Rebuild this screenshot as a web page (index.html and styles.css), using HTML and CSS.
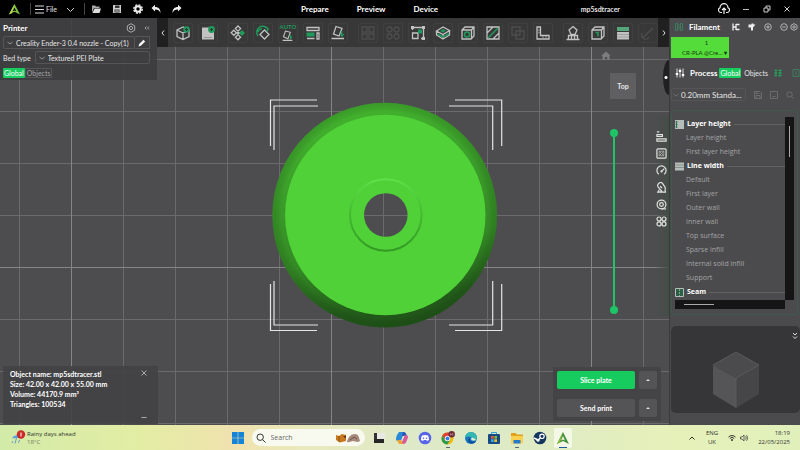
FILE: index.html
```html
<!DOCTYPE html>
<html lang="en">
<head>
<meta charset="utf-8">
<title>mp5sdtracer</title>
<link rel="stylesheet" href="styles.css">
</head>
<body>

<header class="titlebar">
    <div class="title-left">
        <svg class="logo" viewBox="0 0 14 14"><path d="M1 12.500 L7 1 L13 12.500 L7 9.500Z M7 5 L5 9 L7 8 L9 9Z" fill="#7cc242" fill-rule="evenodd"/><path d="M7 1 L1 12.500 L4 11Z" fill="#c6d64a"/></svg>
        <span class="sep"></span>
        <button class="file"><svg class="i9" viewBox="0 0 9 9"><path d="M0 1h9M0 4.500h9M0 8h9" stroke="#ddd"/></svg>File</button>
        <button class="drop" aria-label="More"><svg class="i9" viewBox="0 0 9 9"><path d="M1 3l3.500 3.500L8 3" stroke="#ccc" fill="none"/></svg></button>
        <span class="sep"></span>
        <div class="quick">
            <button aria-label="Open"><svg class="i10" viewBox="0 0 10 10"><path d="M1 8.500V1.500h3l1 1h3.500v1.500H3z" fill="#aaa"/><path d="M1.500 9L3.500 4.500H10L8.500 9z" fill="#ddd"/></svg></button>
            <button aria-label="Save"><svg class="i10" viewBox="0 0 10 10"><path d="M1 1h8v8H1z" fill="#ccc"/><path d="M3 1.500h4.500v2.500H3zM2.500 5.500h5v3h-5z" fill="#333"/><path d="M3 7h4" stroke="#ccc"/></svg></button>
            <button aria-label="Settings"><svg class="i10" viewBox="0 0 10 10"><circle cx="5" cy="5" r="2.700" fill="none" stroke="#eee" stroke-width="2"/><circle cx="5" cy="5" r="4.200" fill="none" stroke="#eee" stroke-width="1.400" stroke-dasharray="2 1.300"/></svg></button>
            <button class="undo" aria-label="Undo"><svg class="i10" viewBox="0 0 10 10"><path d="M0.500 4L4 0.800V3c3.500 0 5.500 2 5.500 6C8.500 6.500 7 5.500 4 5.500v2z" fill="#eee"/></svg></button>
            <button aria-label="Redo"><svg class="i10" viewBox="0 0 10 10"><path d="M9.500 4L6 0.800V3C2.500 3 0.500 5 0.500 9 1.500 6.500 3 5.500 6 5.500v2z" fill="#eee"/></svg></button>
        </div>
    </div>
    <nav class="tabs">
        <a href="#prepare">Prepare</a>
        <a href="#preview">Preview</a>
        <a href="#device">Device</a>
    </nav>
    <span class="project">mp5sdtracer</span>
    <div class="title-right">
        <button aria-label="Upload"><svg class="i12" viewBox="0 0 12 12"><path d="M4 9.500H3A2.500 2.500 0 0 1 2 4.700 4 4 0 0 1 10 4.700 2.500 2.500 0 0 1 9 9.500H8M6 11V5M4 7l2-2 2 2" fill="none" stroke="#eee" stroke-width="1.200"/></svg></button>
        <button aria-label="Minimize"><svg class="i8" viewBox="0 0 8 8"><path d="M1 4.500h6" stroke="#bbb"/></svg></button>
        <button aria-label="Restore"><svg class="i8" viewBox="0 0 8 8"><path d="M1 3h4v4H1zM3 3V1h4v4H5" fill="none" stroke="#ccc"/></svg></button>
        <button aria-label="Close"><svg class="i8" viewBox="0 0 8 8"><path d="M1.500 1.500l5 5M6.500 1.500l-5 5" stroke="#ccc"/></svg></button>
    </div>
</header>

<main class="work">
    <section class="viewport">
        <svg class="scene" viewBox="0 0 669 407" preserveAspectRatio="xMidYMid slice">
            <defs>
                <pattern id="grid" x="19" y="41" width="52" height="52" patternUnits="userSpaceOnUse"><path d="M0 0.500H52M0.500 0V52" stroke="#6a6a6d"/></pattern>
                <linearGradient id="side" x1="0.400" y1="0" x2="0.600" y2="1">
                    <stop offset="0" stop-color="#43b32e"/><stop offset="0.350" stop-color="#3b9d2a"/><stop offset="0.650" stop-color="#348a25"/><stop offset="0.900" stop-color="#225a1a"/><stop offset="1" stop-color="#205218"/>
                </linearGradient>
                <radialGradient id="rim"><stop offset="0.920" stop-color="#000" stop-opacity="0"/><stop offset="1" stop-color="#173f12" stop-opacity="0.200"/></radialGradient>
                <linearGradient id="lip" x1="0" y1="0" x2="0" y2="1">
                    <stop offset="0" stop-color="#62df4b"/><stop offset="0.450" stop-color="#45bd32"/><stop offset="1" stop-color="#329a23"/>
                </linearGradient>
                <mask id="hole"><rect width="669" height="407" fill="#fff"/><circle cx="385.800" cy="197" r="21.800" fill="#000"/></mask>
            </defs>
            <rect width="669" height="407" fill="#4d4d50"/>
            <rect width="669" height="407" fill="url(#grid)"/>
            <path d="M71.500 0V407M331.500 0V407M591.500 0V407M0 249.500H669" stroke="#858588"/>
            <g fill="none" stroke="#e4e4e4" stroke-width="1.200">
                <path d="M317 82H270.500V128M318 88H274V132M455 82H501.700V128M449 88H492.700V132"/>
                <path d="M317 312.500H270.500V266M318 307H274V263M455 312.500H501.700V266M449 307H492.700V263"/>
            </g>
            <g mask="url(#hole)">
                <circle cx="384.700" cy="197.200" r="112.400" fill="url(#side)"/>
                <circle cx="384.700" cy="197.200" r="112.400" fill="url(#rim)"/>
                <circle cx="385.300" cy="197" r="100.200" fill="#4fd137"/>
                <circle cx="385.800" cy="197" r="35.800" fill="none" stroke="url(#lip)" stroke-width="2"/>
            </g>
        </svg>

        <aside class="printer">
            <div class="head">
                <h2>Printer</h2>
                <button aria-label="Printer settings"><svg class="i10" viewBox="0 0 10 10"><path d="M5 0.700l3.700 2.100v4.400L5 9.300 1.300 7.200V2.800z" fill="none" stroke="#aaa"/><circle cx="5" cy="5" r="1.600" fill="none" stroke="#aaa"/></svg></button>
                <button aria-label="Collapse"><svg class="i6" viewBox="0 0 6 6"><path d="M2.500 1.500L1 3l1.500 1.500M5 1.500L3.500 3 5 4.500" fill="none" stroke="#bbb" stroke-width="0.800"/></svg></button>
            </div>
            <div class="machine">
                <div class="pick grow">
                    <svg class="i6" viewBox="0 0 6 6"><path d="M0.500 2L3 4 5.500 2" fill="none" stroke="#aaa" stroke-width="0.800"/></svg>
                    <select aria-label="Printer"><option>Creality Ender-3 0.4 nozzle - Copy(1)</option></select>
                </div>
                <button class="edit" aria-label="Edit"><svg class="i8" viewBox="0 0 8 8"><path d="M0.500 7.500l0.700-2.400L5.500 0.800l1.700 1.700-4.300 4.300z" fill="#f4f4f4"/></svg></button>
            </div>
            <div class="bed">
                <label for="bed">Bed type</label>
                <div class="pick grow">
                    <svg class="i6" viewBox="0 0 6 6"><path d="M0.500 2L3 4 5.500 2" fill="none" stroke="#aaa" stroke-width="0.800"/></svg>
                    <select id="bed"><option>Textured PEI Plate</option></select>
                </div>
            </div>
            <div class="scope">
                <button class="on">Global</button><button>Objects</button>
            </div>
        </aside>

        <div class="toolbar">
            <button class="arrow" aria-label="Scroll left"><svg class="i8" viewBox="0 0 8 8"><path d="M5 1.500L3 4l2 2.500" fill="none" stroke="#ddd"/></svg></button>
            <div class="tools">
                <div class="group">
                    <button aria-label="Add model"><svg viewBox="0 0 16 16"><path d="M8 2L2 5v6.500L8 14.500l6-3V5zM2 5l6 3 6-3M8 8v6.500" class="w"/><circle cx="11.500" cy="4.500" r="3.200" fill="#1f9a5c"/><path d="M11.500 3v3M10 4.500h3" stroke="#2d3a32"/></svg></button>
                    <button aria-label="Add plate"><svg viewBox="0 0 16 16"><path d="M2 2.500h12v12H2z" fill="#c2c2c2"/><path d="M4 12.500h8" stroke="#999"/><circle cx="11.500" cy="4.500" r="3.400" fill="#1f9a5c"/><path d="M11.500 3v3M10 4.500h3" stroke="#2d3a32"/></svg></button>
                </div>
                <div class="group">
                    <button aria-label="Move"><svg viewBox="0 0 16 16"><path d="M8 1l2.600 2.600L8 6.200 5.400 3.600zM3.800 5.200l2.600 2.600-2.600 2.600-2.600-2.600zM8 9.600l2.600 2.600L8 14.800l-2.600-2.600z" class="w"/><path d="M12 5l3 3-3 3-3-3z" fill="#1f9a5c"/><path d="M6.500 7h3v2h-3z" fill="#c2c2c2"/></svg></button>
                    <button aria-label="Rotate"><svg viewBox="0 0 16 16"><path d="M9.500 5l4.500 4.500-4.500 4.500L5 9.500z" class="w"/><path d="M3 11A6 6 0 0 1 12.500 3.500M10 2l3 1.500-1 3M3 7a3.500 3.500 0 0 1 4-3" class="g"/></svg></button>
                    <button class="auto" aria-label="Auto orient"><span>AUTO</span><svg viewBox="0 0 16 16"><path d="M5.500 2.500l6 1.500-3 8-5.500-2.500zM2 14h12" class="w"/><path d="M11.500 7v5M13.500 9.500l-2 2.500" class="g"/></svg></button>
                    <button aria-label="Arrange"><svg viewBox="0 0 16 16"><path d="M2 2.500h12v3H2zM12 8h2v6h-2zM2 13.500h7.500" class="w"/><path d="M1.500 7.500h8v4h-8z" fill="#1f9a5c"/></svg></button>
                    <button aria-label="Lay flat"><svg viewBox="0 0 16 16"><path d="M6 1.500l6 2-3 7.500-5.500-2zM1.500 13.500H14" class="w"/><path d="M11.500 6v5M13.500 9l-2 2.500" class="g"/></svg></button>
                </div>
                <div class="group">
                    <button class="off" disabled aria-label="Split objects"><svg viewBox="0 0 16 16"><path d="M2 2h5v5H2zM9 2h5v5H9zM2 9h5v5H2zM9 9h5v5H9z" class="w"/></svg></button>
                    <button class="off" disabled aria-label="Split parts"><svg viewBox="0 0 16 16"><circle cx="4.500" cy="4.500" r="2.500" class="w"/><circle cx="11.500" cy="4.500" r="2.500" class="w"/><circle cx="4.500" cy="11.500" r="2.500" class="w"/><circle cx="11.500" cy="11.500" r="2.500" class="w"/></svg></button>
                    <button aria-label="Scale"><svg viewBox="0 0 16 16"><path d="M2.500 8h5.500v5.500H2.500zM2.500 5V2.500H13.500V13.500H11" class="w"/><path d="M1 1h3v3H1zM12 1h3v3h-3zM12 12h3v3h-3z" fill="#c2c2c2"/><path d="M8 4.500h4v4H8z" fill="#1f9a5c"/></svg></button>
                    <button aria-label="Cut"><svg viewBox="0 0 16 16"><path d="M1.500 6L8 2l6.500 3.500L8 9.500zM1.500 6v4L8 14l6.500-4V5.500M8 9.500V14" class="w"/><path d="M2.500 9L8 12l6-3.500" class="g"/><path d="M5 6l3-2 3 1.500-3 2z" fill="#1f9a5c"/></svg></button>
                    <button aria-label="Hollow"><svg viewBox="0 0 16 16"><path d="M2 5l3-3h9v9l-3 3H2zM2 5h9.500v9M11.500 5L14 2" class="w"/><circle cx="7" cy="9.500" r="2.500" class="g"/></svg></button>
                    <button aria-label="Hatch"><svg viewBox="0 0 16 16"><path d="M2 2h12v12H2zM2 8l6-6M8 14l6-6" class="w"/><path d="M3 13L13 3" class="g"/></svg></button>
                    <button class="off" disabled aria-label="Boolean"><svg viewBox="0 0 16 16"><path d="M2 2h8v8H2zM6 6h8v8H6z" class="w"/></svg></button>
                    <button aria-label="Measure"><svg viewBox="0 0 16 16"><path d="M2 2h3.500v8.500H14V14H2z" class="w"/><path d="M3.500 5h1M3.500 7.500h1M8 12.500v-1M11 12.500v-1" class="w"/></svg></button>
                </div>
                <div class="group">
                    <button aria-label="Supports"><svg viewBox="0 0 16 16"><path d="M8 1.500l4 3.500-2 4.500H6L4 5zM1.500 14.500h13M3.500 14v-3.500h9V14M6.500 14v-4M9.500 14v-4" class="w"/></svg></button>
                    <button aria-label="Seam"><svg viewBox="0 0 16 16"><path d="M2 5l3-3h9v9l-3 3H2zM2 5h9.500v9M11.500 5L14 2" class="w"/><path d="M5.500 7.500h2.500v4" class="g"/></svg></button>
                    <button aria-label="Layers"><svg viewBox="0 0 16 16"><path d="M2 2h12v4H2z" fill="#55a77b"/><path d="M2 7h12v7.500H2z" fill="#c2c2c2"/><path d="M2 9.500h12M2 12h12" stroke="#888" stroke-width="0.600"/></svg></button>
                    <button class="off" disabled aria-label="Paint"><svg viewBox="0 0 16 16"><path d="M3 12.500L13 3M2 8a4 4 0 1 0 7 4" class="w"/></svg></button>
                </div>
            </div>
            <button class="arrow" aria-label="Scroll right"><svg class="i8" viewBox="0 0 8 8"><path d="M3 1.500L5 4 3 6.500" fill="none" stroke="#ddd"/></svg></button>
        </div>

        <div class="view-cube">
            <button class="home" aria-label="Home view"><svg class="i10" viewBox="0 0 10 10"><path d="M5 0.500l4.700 4.300H8.500V9h-2.300V6H3.800v3H1.500V4.800H0.300z" fill="#7d7d7f"/></svg></button>
            <button class="face">Top</button>
        </div>
        <button class="fold" aria-label="Toggle sidebar"></button>

        <div class="layers">
            <input type="range" aria-label="Top layer" min="0" max="100" value="100">
            <input type="range" aria-label="Bottom layer" min="0" max="100" value="0">
        </div>

        <div class="categories">
            <button aria-label="Quality"><svg viewBox="0 0 12 12"><path d="M1 1h2.500M1 4h6v2H1zM1 8.500h10V11H1z" class="w"/></svg></button>
            <button aria-label="Strength"><svg viewBox="0 0 12 12"><rect x="1" y="1" width="10" height="10" rx="1" class="w"/><path d="M3.500 3.500h5v5h-5zM3.500 3.500l5 5M8.500 3.500l-5 5" stroke="#b4bab4" stroke-width="0.800" fill="none"/></svg></button>
            <button aria-label="Speed"><svg viewBox="0 0 12 12"><path d="M3 10a5 5 0 1 1 6 0M6 7l3-3" class="w"/><circle cx="6" cy="7" r="1.200" fill="#e0e4e0"/></svg></button>
            <button aria-label="Support"><svg viewBox="0 0 12 12"><path d="M2.500 5.500a3 3 0 0 1 5-3.500L10 6v5H7L2.500 5.500zM1 11h10M3 11V8.500M5.500 11V9M4.500 4.500l2 2" class="w"/></svg></button>
            <button aria-label="Adhesion"><svg viewBox="0 0 12 12"><circle cx="6" cy="6" r="4.800" class="w"/><circle cx="6" cy="6" r="2" class="w"/><path d="M6 10.800h5" class="w"/></svg></button>
            <button aria-label="Others"><svg viewBox="0 0 12 12"><circle cx="3.300" cy="3.300" r="2.200" class="w"/><circle cx="8.700" cy="3.300" r="2.200" class="w"/><circle cx="3.300" cy="8.700" r="2.200" class="w"/><circle cx="8.700" cy="8.700" r="2.200" class="w"/></svg></button>
        </div>

        <div class="object-info">
            <p>Object name: mp5sdtracer.stl<br>Size: 42.00 x 42.00 x 55.00 mm<br>Volume: 44170.9 mm³<br>Triangles: 100534</p>
            <div class="info-buttons">
                <button aria-label="Close"><svg class="i8" viewBox="0 0 8 8"><path d="M1.500 1.500l5 5M6.500 1.500l-5 5" stroke="#aaa"/></svg></button>
                <button aria-label="Minimize"><svg class="i6" viewBox="0 0 6 6"><path d="M0.500 3.500h5" stroke="#aaa"/></svg></button>
            </div>
        </div>

        <div class="actions">
            <button class="primary">Slice plate</button>
            <button class="more" aria-label="Slice options"><svg class="i6" viewBox="0 0 6 6"><path d="M1 4L3 2 5 4z" fill="#ddd"/></svg></button>
            <button>Send print</button>
            <button class="more" aria-label="Print options"><svg class="i6" viewBox="0 0 6 6"><path d="M1 4L3 2 5 4z" fill="#ddd"/></svg></button>
        </div>
    </section>

    <aside class="sidebar">
        <div class="filament-head">
            <svg class="i8" viewBox="0 0 8 8"><path d="M0.500 0.500h2v7h-2zM5.500 0.500h2v7h-2zM2.500 2h3M2.500 4h3M2.500 6h3" fill="none" stroke="#3c7c5c"/></svg>
            <h2>Filament</h2>
            <button aria-label="Sync"><svg class="i8" viewBox="0 0 8 8"><path d="M1 0.500v7M1 4h3M4 1v6M4 1.500h3.500M4 6.500h3.500" stroke="#eee" fill="none" stroke-width="1.300"/></svg></button>
            <button aria-label="Flush"><svg class="i8" viewBox="0 0 8 8"><path d="M0.500 1.500h3V0.500h2v1h2L5 4.500v3H3v-3H0.500z" fill="#eee"/></svg></button>
            <button aria-label="Add"><svg class="i8" viewBox="0 0 8 8"><circle cx="4" cy="4" r="3.300" class="l"/><path d="M4 2.200v3.600M2.200 4h3.600" class="l"/></svg></button>
            <button aria-label="Remove"><svg class="i8" viewBox="0 0 8 8"><circle cx="4" cy="4" r="3.300" class="l"/><path d="M2.200 4h3.600" class="l"/></svg></button>
            <button class="last" aria-label="Filament settings"><svg class="i8" viewBox="0 0 8 8"><path d="M4 0.600l3 1.700v3.400L4 7.400 1 5.700V2.300z" class="l"/><circle cx="4" cy="4" r="1.200" class="l"/></svg></button>
        </div>
        <button class="spool"><span>1</span><span>CR-PLA @Cre... <b>▾</b></span></button>

        <div class="process-head">
            <svg class="i10" viewBox="0 0 10 10"><path d="M2 0.500v9M5 0.500v9M8 0.500v9" stroke="#ddd"/><path d="M0.800 6h2.400M3.800 3h2.400M6.800 7h2.400" stroke="#fff" stroke-width="1.800"/></svg>
            <h2>Process</h2>
            <div class="scope"><button class="on">Global</button><button>Objects</button></div>
            <button aria-label="Tree view"><svg class="i8" viewBox="0 0 8 8"><path d="M0.500 1.500h2.500M0.500 4h2.500M0.500 6.500h2.500M4.500 1.500H7.500M4.500 4H7.500M4.500 6.500H7.500" stroke="#1fae60" stroke-width="1.300"/></svg></button>
            <button aria-label="Compare"><svg class="i8" viewBox="0 0 8 8"><path d="M1 0.500h6v7H1zM4 2v4" fill="none" stroke="#3c7c5c"/></svg></button>
        </div>
        <div class="preset">
            <div class="pick">
                <svg class="i6" viewBox="0 0 6 6"><path d="M0.500 2L3 4 5.500 2" fill="none" stroke="#777" stroke-width="0.800"/></svg>
                <select aria-label="Process preset"><option>0.20mm Standa...</option></select>
            </div>
            <button aria-label="Save preset"><svg class="i8" viewBox="0 0 8 8"><path d="M0.500 0.500h5.500l1.500 1.500v5.500h-7zM2 0.500v2h3M2 7.500v-3h4v3" class="d"/></svg></button>
            <button aria-label="Save preset as"><svg class="i8" viewBox="0 0 8 8"><path d="M0.500 0.500h7v7h-7zM2.500 5.500h3" class="d"/></svg></button>
            <button aria-label="Search"><svg class="i8" viewBox="0 0 8 8"><circle cx="3.500" cy="3.500" r="2.700" class="d"/><path d="M5.500 5.500l2 2" class="d"/></svg></button>
        </div>

        <div class="settings">
            <div class="list">
                <h3><svg class="i9" viewBox="0 0 9 9"><path d="M0 0h9v9H0z" fill="#b5bdb8"/><path d="M1.500 1v7M0.500 2h2M0.500 4.500h2M0.500 7h2" stroke="#2f7150"/></svg>Layer height</h3>
                <a href="#layer-height">Layer height</a>
                <a href="#first-layer-height">First layer height</a>
                <h3><svg class="i9" viewBox="0 0 9 9"><path d="M0 0.500h9v8H0z" fill="#b5bdb8"/><path d="M0 3h9M0 5.500h9" stroke="#88918c"/></svg>Line width</h3>
                <a href="#default">Default</a>
                <a href="#first-layer">First layer</a>
                <a href="#outer-wall">Outer wall</a>
                <a href="#inner-wall">Inner wall</a>
                <a href="#top-surface">Top surface</a>
                <a href="#sparse-infill">Sparse infill</a>
                <a href="#internal-solid-infill">Internal solid infill</a>
                <a href="#support">Support</a>
                <h3><svg class="i9" viewBox="0 0 9 9"><path d="M0.500 0.500h8v8h-8z" fill="#2b5f46" stroke="#b5bdb8"/><path d="M4.500 1v7" stroke="#7fa492" stroke-dasharray="2 1"/></svg>Seam</h3>
            </div>
            <div class="vbar"><span></span></div>
            <div class="hbar"><span></span></div>
        </div>

        <div class="thumb">
            <svg class="model" viewBox="0 0 48 58"><path d="M24 1L47 14 24 27 1 14z" fill="#4b4b4d"/><path d="M1 14L24 27V57L1 43z" fill="#555557"/><path d="M47 14L24 27V57L47 43z" fill="#464648"/><path d="M1 14L24 1 47 14M24 27V57M24 27L47 14" fill="none" stroke="#5a5a5c"/></svg>
            <button aria-label="Collapse preview"><svg class="i8" viewBox="0 0 8 8"><path d="M2 1l2 2 2-2M2 4.500l2 2 2-2" fill="none" stroke="#ddd"/></svg></button>
        </div>
    </aside>
</main>

<footer class="taskbar">
    <a class="weather" href="#weather">
        <svg class="w16" viewBox="0 0 16 16"><path d="M2 8.500a5 5 0 0 1 9-1z" fill="#5ba3dd"/><path d="M6.500 8l-1.500 5.500M3 11l-1 2M9.500 10l-1 3" stroke="#6b9cc4"/><circle cx="11" cy="4.500" r="4.200" fill="#cb2a2a"/><path d="M11 2.500v4" stroke="#fff"/></svg>
        <span>Rainy days ahead<small>18°C</small></span>
    </a>
    <div class="apps">
        <button aria-label="Start"><svg viewBox="0 0 14 14"><path d="M1 1h5.700v5.700H1zM7.300 1H13v5.700H7.300zM1 7.300h5.700V13H1zM7.300 7.300H13V13H7.300z" fill="#1583d6"/></svg></button>
        <label class="search">
            <svg class="i10" viewBox="0 0 10 10"><circle cx="4.200" cy="4.200" r="3.200" fill="none" stroke="#333"/><path d="M6.500 6.500L9.500 9.500" stroke="#333"/></svg>
            <input type="text" placeholder="Search" aria-label="Search">
            <svg class="critter" viewBox="0 0 26 12"><path d="M1 3l3 1 3-2 4 1v6l-6 1.500L1 8z" fill="#c97a1e"/><path d="M4 4v6" stroke="#874c12"/><path d="M8 4.500l3-1v3z" fill="#5d3514"/><path d="M12 10c1-5 4-8 8-8s4 4 5 7c-3 2-5 0-7 0s-4 2-6 1z" fill="#a58a7c"/><path d="M15 8l4-3 3 2" stroke="#6c544a" fill="none"/></svg>
        </label>
        <button aria-label="Task view"><svg viewBox="0 0 14 14"><path d="M2 2h6v10H2z" fill="#333"/><path d="M5 2h8v6H5z" fill="#e9e9e4"/><path d="M2 8h10v4H2z" fill="#262626"/></svg></button>
        <button aria-label="Copilot"><svg viewBox="0 0 14 14"><path d="M4 1h5l-3 9H3C0 10 1 7 2 4z" fill="#2a8ad8"/><path d="M8 1h1c2 0 2 3 3 3L9 5H7z" fill="#2855b8"/><path d="M10 4h1c3 0 2 3 1 5-1 3-2 4-4 4H6z" fill="#d95a9c"/><path d="M2 9h4l2 4H5c-2 0-2-3-3-4z" fill="#efa22e"/></svg></button>
        <button aria-label="Discord"><svg viewBox="0 0 14 14"><circle cx="7" cy="7" r="6.300" fill="#5865e8"/><path d="M4 4.500c2-.8 4-.8 6 0 .8 1.500 1 3 1 4.500l-2 1-.7-1H5.700L5 10 3 9c0-1.500.2-3 1-4.500z" fill="#fff"/><circle cx="5.500" cy="7.200" r="0.800" fill="#5865e8"/><circle cx="8.500" cy="7.200" r="0.800" fill="#5865e8"/></svg></button>
        <button class="running" aria-label="Chrome"><svg viewBox="0 0 14 14"><circle cx="6.500" cy="7.500" r="6" fill="#f2b90f"/><path d="M1.300 4.500A6 6 0 0 1 12 5H6.500L4 9z" fill="#de4334"/><path d="M1.300 4.500A6 6 0 0 0 6.200 13.500L9 9.500H4z" fill="#299b4b"/><circle cx="6.500" cy="7.500" r="2.700" fill="#fff"/><circle cx="6.500" cy="7.500" r="2" fill="#377fe8"/><circle cx="10.700" cy="3.300" r="3.200" fill="#6c2a38"/><path d="M9.500 4.500v-2l1.200 1 1.200-1v2" fill="none" stroke="#d8b8bc" stroke-width="0.600"/></svg></button>
        <button aria-label="Edge"><svg viewBox="0 0 14 14"><circle cx="7" cy="7" r="6" fill="#1876c4"/><path d="M1 7a6 6 0 0 1 12 0c0 2-3 3-5 2 1-3-3-5-7-2z" fill="#35b8b0"/><path d="M6 7c-1 3 2 5 6 3-2 4-8 3-8-1 0-1 1-2 2-2z" fill="#124f98"/><path d="M7 7.500c1-1.500 3-.5 5 1.500-2 1-5 1-5-1.500z" fill="#e5edcf"/></svg></button>
        <button aria-label="Store"><svg viewBox="0 0 14 14"><path d="M4.500 3.500V1.500h5v2" fill="none" stroke="#2aa3df"/><rect x="1" y="3" width="12" height="10" rx="1" fill="#174b83"/><path d="M4 5h2.700v2.700H4z" fill="#e5563c"/><path d="M7.300 5H10v2.700H7.300z" fill="#7cb93c"/><path d="M4 8.300h2.700V11H4z" fill="#39a5e8"/><path d="M7.300 8.300H10V11H7.300z" fill="#f2bd32"/></svg></button>
        <button class="running" aria-label="Explorer"><svg viewBox="0 0 14 14"><path d="M1 2h4.500L7 3.500h6V6H1z" fill="#e0a21d"/><path d="M1 5h12v7.500H1z" fill="#fbd152"/><path d="M3.500 9h7v3.500h-7z" fill="#2479c8"/></svg></button>
        <button aria-label="Steam"><svg viewBox="0 0 14 14"><circle cx="7" cy="7" r="6.300" fill="#14365e"/><circle cx="9" cy="5.300" r="2.200" fill="none" stroke="#fff" stroke-width="1.200"/><path d="M1 7l4 2 3-2.500" stroke="#fff" stroke-width="1.500" fill="none"/><circle cx="5" cy="9.300" r="1.500" fill="#fff"/></svg></button>
        <button class="running active" aria-label="Creality Print"><svg viewBox="0 0 14 14"><path d="M1 13L7 1 13 13 7 10Z M7 5 L5 9.500 L7 8.500 L9 9.500Z" fill="#448f3c" fill-rule="evenodd"/><path d="M7 1L1 13l3-1.500z" fill="#8fbc38"/></svg></button>
    </div>
    <div class="tray">
        <button aria-label="Hidden icons"><svg class="i8" viewBox="0 0 8 8"><path d="M1.500 5.500L4 3l2.500 2.500" fill="none" stroke="#333"/></svg></button>
        <span class="lang">ENG<br>UK</span>
        <span class="net">
            <svg class="i8" viewBox="0 0 8 8"><path d="M0.500 3a5 5 0 0 1 7 0M1.800 4.500a3 3 0 0 1 4.400 0" fill="none" stroke="#333"/><circle cx="4" cy="6" r="1" fill="#333"/></svg>
            <svg class="i8" viewBox="0 0 8 8"><path d="M0.500 3h1.500L4 1v6L2 5H0.500zM5.500 2.500a2 2 0 0 1 0 3M6.500 1.200a4 4 0 0 1 0 5.600" fill="none" stroke="#444" stroke-width="0.800"/></svg>
        </span>
        <span class="clock">18:19<br>22/05/2025</span>
    </div>
</footer>

</body>
</html>
```

FILE: styles.css
```css
* {
    box-sizing: border-box;
}

body {
    margin: 0;
    height: 100vh;
    display: flex;
    flex-direction: column;
    overflow: hidden;
    background: #4d4d50;
    color: #e6e6e6;
    font-family: Lato, "Open Sans", sans-serif;
    font-size: 7px;
    line-height: 10px;
}

button, select, input {
    font: inherit;
    color: inherit;
    background: none;
    border: 0;
    padding: 0;
    margin: 0;
}

a {
    color: inherit;
    text-decoration: none;
}

h2, h3, p {
    margin: 0;
    font-size: 7px;
    font-weight: bold;
}

h2 {
    font-size: 8px;
    color: #fff;
}

svg {
    display: block;
    flex: none;
}

.i6 { width: 6px; height: 6px; }
.i8 { width: 8px; height: 8px; }
.i9 { width: 9px; height: 9px; }
.i10 { width: 10px; height: 10px; }
.i12 { width: 12px; height: 12px; }
.w16 { width: 16px; height: 16px; }

.w { fill: none; stroke: #c2c2c2; stroke-width: 1.3; }
.g { fill: none; stroke: #1f9a5c; stroke-width: 1.5; }
.l { fill: none; stroke: #ccc; stroke-width: 0.8; }
.d { fill: none; stroke: #747476; stroke-width: 0.8; }

/* title bar */
.titlebar {
    height: 18px;
    flex: none;
    display: grid;
    grid-template-columns: 287px 165px 1fr 100px;
    align-items: center;
    background: #000;
}

.title-left {
    display: flex;
    align-items: center;
    gap: 9px;
    padding-left: 8px;
}

.logo {
    width: 13px;
    height: 13px;
}

.sep {
    width: 1px;
    height: 12px;
    margin-right: -3px;
    background: #444;
}

.file {
    display: flex;
    align-items: center;
    gap: 2px;
    margin-left: -2px;
}

.quick {
    display: flex;
    gap: 11px;
}

.undo {
    margin-left: -3px;
}

.tabs {
    display: flex;
    justify-content: space-around;
    font-size: 8px;
    font-weight: bold;
    color: #fff;
}

.project {
    justify-self: end;
    padding-right: 80px;
    font-weight: bold;
}

.title-right {
    display: flex;
    align-items: center;
    justify-content: space-between;
    padding: 0 9px 0 18px;
}

/* workspace */
.work {
    flex: 1;
    min-height: 0;
    display: flex;
}

.viewport {
    position: relative;
    flex: 1;
    min-width: 0;
}

.scene {
    position: absolute;
    width: 100%;
    height: 100%;
}

.printer {
    position: absolute;
    top: 0;
    left: 0;
    width: 157px;
    padding: 3px 7px 2px 3px;
    background: rgba(61, 61, 63, 0.9);
}

.head, .machine, .bed {
    display: flex;
    align-items: center;
}

.head {
    gap: 8px;
    height: 13px;
}

.head h2 {
    flex: 1;
}

.pick {
    display: flex;
    align-items: center;
    gap: 3px;
    height: 13px;
    padding-left: 3px;
    border: 1px solid #555558;
    border-radius: 2px;
}

.pick select {
    flex: 1;
    min-width: 0;
    appearance: none;
}

.grow {
    flex: 1;
}

.machine, .bed {
    margin-top: 2px;
}

.edit {
    width: 15px;
    height: 13px;
    display: grid;
    place-items: center;
    border: 1px solid #555558;
    border-left: 0;
}

.bed .pick {
    margin-left: 4px;
}

.printer .scope {
    margin-top: 4px;
}

.scope {
    display: flex;
}

.scope button {
    height: 10px;
    line-height: 10px;
    padding: 0 1px;
}

.scope .on {
    background: #17cc5f;
    color: #fff;
    border-radius: 1px;
}

.printer .scope button + button {
    border: 1px solid #555558;
    line-height: 8px;
    color: #a5a5a7;
}

.toolbar {
    position: absolute;
    top: 0;
    left: 157px;
    right: 0;
    height: 29px;
    display: flex;
    background: rgba(54, 54, 55, 0.92);
}

.arrow {
    width: 11px;
    display: grid;
    place-items: center;
    background: #202021;
}

.tools {
    flex: 1;
    min-width: 0;
    overflow: hidden;
    display: flex;
    align-items: center;
    gap: 10px;
    padding-left: 5px;
}

.group {
    display: flex;
    gap: 5px;
}

.group button {
    width: 20px;
    height: 20px;
    display: grid;
    place-items: center;
    border: 1px solid #404041;
    border-radius: 2px;
}

.group svg {
    width: 16px;
    height: 16px;
}

.group .auto {
    align-content: center;
    justify-content: center;
    color: #1f9a5c;
    font-size: 6px;
    font-weight: bold;
    line-height: 5px;
}

.group .auto svg {
    width: 13px;
    height: 13px;
}

.off svg {
    opacity: 0.15;
}

.view-cube {
    position: absolute;
    top: 33px;
    right: 33px;
    width: 26px;
}

.home {
    display: block;
    margin-left: -9px;
}

.face {
    width: 26px;
    height: 26px;
    margin-top: 12px;
    background: #5f5f62;
    font-weight: bold;
}

.fold {
    position: absolute;
    top: 42px;
    right: 0;
    width: 6px;
    height: 35px;
    border-radius: 6px 0 0 6px / 18px 0 0 18px;
    background: radial-gradient(circle, #fff 1px, #202021 2px);
}

.layers {
    position: absolute;
    top: 111px;
    right: 51px;
    width: 8px;
    height: 185px;
    background: linear-gradient(#1dc566, #1dc566) center / 2px 177px no-repeat;
}

.layers input {
    position: absolute;
    inset: 0;
    width: 8px;
    height: 185px;
    appearance: none;
    writing-mode: vertical-lr;
    direction: rtl;
    pointer-events: none;
}

.layers input::-webkit-slider-thumb {
    appearance: none;
    width: 8px;
    height: 8px;
    border-radius: 50%;
    background: #1dc566;
    pointer-events: auto;
}

.categories {
    position: absolute;
    top: 98px;
    right: 0;
    height: 200px;
    padding: 15px 2px;
    display: flex;
    flex-direction: column;
    gap: 6px;
    background: linear-gradient(90deg, transparent, #454d46);
}

.categories svg {
    width: 11px;
    height: 11px;
}

.categories .w {
    stroke: #e0e4e0;
}

.object-info {
    position: absolute;
    left: 3px;
    bottom: 1px;
    width: 155px;
    height: 58px;
    display: flex;
    justify-content: space-between;
    padding: 3px 10px 4px 7px;
    background: rgba(67, 67, 69, 0.9);
    color: #fff;
}

.info-buttons {
    display: flex;
    flex-direction: column;
    justify-content: space-between;
    align-items: center;
}

.actions {
    position: absolute;
    right: 8px;
    bottom: 4px;
    padding: 4px;
    display: grid;
    grid-template-columns: 78px 18px;
    gap: 10px 4px;
    background: #444446;
}

.actions button {
    height: 18px;
    border-radius: 2px;
    background: #545457;
    color: #fff;
    font-weight: bold;
}

.actions .more {
    display: grid;
    place-items: center;
}

.actions .primary {
    background: #17cc5f;
}

/* right sidebar */
.sidebar {
    width: 131px;
    flex: none;
    display: flex;
    flex-direction: column;
    padding-left: 1px;
    overflow: hidden;
    background: #4b4b4d;
    border-left: 1px solid #3b3b3d;
}

.filament-head, .process-head, .preset {
    display: flex;
    align-items: center;
    flex: none;
}

.filament-head {
    height: 17px;
    gap: 8px;
    padding-left: 4px;
}

.filament-head h2 {
    margin: 0 4px 0 -2px;
}

.filament-head .last {
    margin-left: -6px;
}

.spool {
    align-self: flex-start;
    width: 58px;
    height: 21px;
    margin-top: 2px;
    display: flex;
    flex-direction: column;
    justify-content: space-between;
    padding: 1px 0 0 9px;
    background: #53dc3a;
    color: #173b11;
    font-size: 6px;
    white-space: nowrap;
}

.spool span:first-child {
    padding-left: 4px;
}

.process-head {
    height: 16px;
    margin-top: 7px;
    gap: 5px;
    padding-left: 4px;
}

.process-head .scope {
    margin-left: -3px;
}

.process-head .scope button {
    padding: 0 1px;
}

.process-head .scope button + button {
    margin-left: 2px;
}

.process-head > button {
    margin-right: 5px;
}

.preset {
    height: 13px;
    margin-top: 7px;
    gap: 8px;
    font-size: 8px;
}

.preset .pick {
    width: 75px;
    padding-left: 1px;
    gap: 2px;
}

.settings {
    flex: none;
    margin: 9px 2px 0 0;
    padding: 6px 3px 5px;
    display: grid;
    grid-template-columns: 1fr 9px;
    border: 1px solid #3d5a4b;
    border-radius: 2px;
    font-family: "Open Sans", sans-serif;
}

.list {
    display: flex;
    flex-direction: column;
    height: 183px;
    overflow: hidden;
}

.list h3 {
    height: 14px;
    flex: none;
    display: flex;
    align-items: center;
    gap: 3px;
    color: #fff;
}

.list h3::after {
    content: "";
    flex: 1;
    height: 1px;
    background: #626265;
}

.list a {
    line-height: 14px;
    padding-left: 11px;
    color: #a3a3a5;
}

.vbar, .hbar {
    background: #151516;
}

.vbar {
    padding: 9px 4px;
}

.vbar span {
    display: block;
    height: 31px;
    width: 1px;
    background: #aaa;
}

.hbar {
    height: 9px;
    padding: 4px 9px;
}

.hbar span {
    display: block;
    height: 1px;
    width: 30px;
    background: #aaa;
}

.thumb {
    position: relative;
    flex: 1;
    margin: 11px 0 12px;
    display: grid;
    place-items: center;
    border-radius: 5px;
    background: #363638;
}

.model {
    width: 48px;
    height: 58px;
    margin-top: 20px;
}

.thumb button {
    position: absolute;
    top: 6px;
    right: 1px;
}

/* taskbar */
.taskbar {
    height: 25px;
    flex: none;
    display: grid;
    grid-template-columns: 1fr auto 1fr;
    align-items: center;
    padding: 0 10px;
    background: linear-gradient(90deg, #d3eba8, #e3eda4 18%, #f0e2ae 29%, #e9e9bd 38%, #dde9c8 52%, #dfebc4 68%, #e6f1b9 85%, #e1f0bb);
    color: #333;
    font-family: "Open Sans", sans-serif;
    font-size: 6px;
}

.weather {
    display: flex;
    align-items: center;
    gap: 1px;
    line-height: 8px;
}

.weather small {
    display: block;
    font-size: 6px;
    color: #71795f;
}

.apps {
    display: flex;
    align-items: center;
    gap: 5px;
    height: 25px;
}

.apps button {
    position: relative;
    width: 18px;
    height: 20px;
    display: grid;
    place-items: center;
    border-radius: 2px;
}

.apps button svg {
    width: 14px;
    height: 14px;
}

.apps .active {
    background: #f4f8e6;
}

.running::after {
    content: "";
    position: absolute;
    bottom: 0;
    width: 4px;
    height: 1px;
    background: #5c6775;
}

.active::after {
    width: 8px;
    background: #1b5a9c;
}

.search {
    width: 113px;
    height: 17px;
    display: flex;
    align-items: center;
    gap: 5px;
    padding: 0 4px;
    border-radius: 9px;
    background: #f9faef;
    font-size: 7px;
}

.search input {
    flex: 1;
    min-width: 0;
    outline: 0;
}

.search input::placeholder {
    color: #666;
}

.critter {
    width: 26px;
    height: 12px;
}

.tray {
    display: flex;
    justify-content: flex-end;
    align-items: center;
    gap: 10px;
    line-height: 9px;
}

.lang {
    text-align: center;
}

.net {
    display: flex;
    gap: 4px;
}

.clock {
    text-align: right;
}
```
